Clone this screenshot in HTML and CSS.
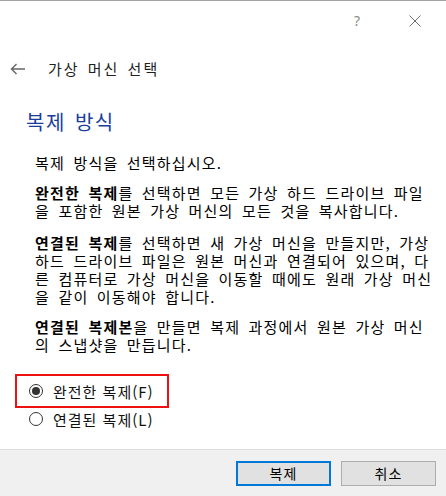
FILE: index.html
```html
<!DOCTYPE html>
<html lang="ko">
<head>
<meta charset="utf-8">
<title>가상 머신 선택</title>
<link rel="stylesheet" href="styles.css">
</head>
<body>
<div class="window">
  <div class="titlebar">
    <span class="help">?</span>
    <svg class="close" width="12" height="12" viewBox="0 0 12 12"><path d="M0.5 0.5 L11.5 11.5 M11.5 0.5 L0.5 11.5" stroke="#6e6e6e" stroke-width="1" fill="none"/></svg>
  </div>
  <div class="nav">
    <svg class="back" width="16" height="12" viewBox="0 0 16 12"><path d="M1.5 6 H15 M6.5 1 L1.5 6 L6.5 11" stroke="#666" stroke-width="1.4" fill="none"/></svg>
    <span class="nav-title">가상 머신 선택</span>
  </div>
  <div class="content">
    <h1 class="heading">복제 방식</h1>
    <div class="body">
      <p>복제 방식을 선택하십시오.</p>
      <p><b>완전한 복제</b>를 선택하면 모든 가상 하드 드라이브 파일<br>을 포함한 원본 가상 머신의 모든 것을 복사합니다.</p>
      <p class="gap"><b>연결된 복제</b>를 선택하면 새 가상 머신을 만들지만, 가상<br>하드 드라이브 파일은 원본 머신과 연결되어 있으며, 다<br>른 컴퓨터로 가상 머신을 이동할 때에도 원래 가상 머신<br>을 같이 이동해야 합니다.</p>
      <p><b>연결된 복제본</b>을 만들면 복제 과정에서 원본 가상 머신<br>의 스냅샷을 만듭니다.</p>
    </div>
    <div class="options">
      <label class="option highlight"><span class="radio checked"></span><span>완전한 복제(F)</span></label>
      <label class="option"><span class="radio"></span><span>연결된 복제(L)</span></label>
    </div>
  </div>
  <div class="footer">
    <button class="btn primary">복제</button>
    <button class="btn">취소</button>
  </div>
</div>
</body>
</html>
```
FILE: styles.css
```css
* { box-sizing: border-box; }
html, body { margin: 0; padding: 0; }
body {
  width: 446px;
  height: 496px;
  background: #fff;
  font-family: "Noto Sans CJK KR", "Noto Sans", sans-serif;
  color: #000;
  overflow: hidden;
}
.window {
  height: 496px;
  display: flex;
  flex-direction: column;
  border-top: 1px solid #a3a3a3;
}
.titlebar {
  height: 40px;
  display: flex;
  align-items: center;
  justify-content: flex-end;
  padding-right: 25px;
  gap: 49px;
}
.help {
  font-family: "Noto Sans", sans-serif;
  font-size: 14px;
  color: #8a8a8a;
  line-height: 1;
  margin-top: -1px;
}
.close { display: block; }
.nav {
  height: 54px;
  display: flex;
  align-items: center;
  padding-left: 10px;
}
.back { display: block; margin-top: 1px; }
.nav-title {
  margin-left: 22px;
  font-size: 15px;
  letter-spacing: 2px;
  word-spacing: 2px;
  color: #1e1e1e;
}
.content {
  padding-left: 26px;
}
.heading {
  margin: 13px 0 0;
  font-size: 20px;
  font-weight: normal;
  line-height: 28px;
  letter-spacing: 1.5px;
  word-spacing: 2px;
  color: #1a3c9c;
}
.body {
  margin-top: 18px;
  padding-left: 9px;
  font-size: 15px;
  line-height: 18px;
  letter-spacing: 1.2px;
  word-spacing: 3px;
  white-space: nowrap;
}
.body p { margin: 0 0 12px; }
.body p.gap { margin-top: 14px; }
.body p:last-child { margin-bottom: 0; }
.body b { font-weight: bold; }
.options {
  margin-top: 23px;
  margin-left: -8px;
  display: flex;
  flex-direction: column;
  align-items: flex-start;
}
.option {
  display: inline-flex;
  align-items: center;
  height: 28px;
  padding: 0 12px 0 11px;
  gap: 10px;
  font-size: 15px;
  letter-spacing: 1px;
  color: #111;
}
.highlight {
  outline: 2px solid #ee1111;
  outline-offset: 1px;
}
.radio {
  width: 14px;
  height: 14px;
  border: 1px solid #333;
  border-radius: 50%;
  display: flex;
  align-items: center;
  justify-content: center;
  background: #fff;
}
.radio.checked::after {
  content: "";
  width: 8px;
  height: 8px;
  border-radius: 50%;
  background: #333;
}
.footer {
  margin-top: auto;
  height: 47px;
  border-top: 1px solid #dfdfdf;
  background: #f0f0f0;
  display: flex;
  align-items: center;
  justify-content: flex-end;
  gap: 10px;
  padding-right: 10px;
}
.btn {
  width: 95px;
  height: 25px;
  border: 1px solid #adadad;
  background: #e1e1e1;
  font-family: "Noto Sans CJK KR", sans-serif;
  font-size: 14px;
  letter-spacing: 1px;
  color: #000;
  padding: 0;
}
.btn.primary {
  border: 2px solid #0078d7;
}
```
